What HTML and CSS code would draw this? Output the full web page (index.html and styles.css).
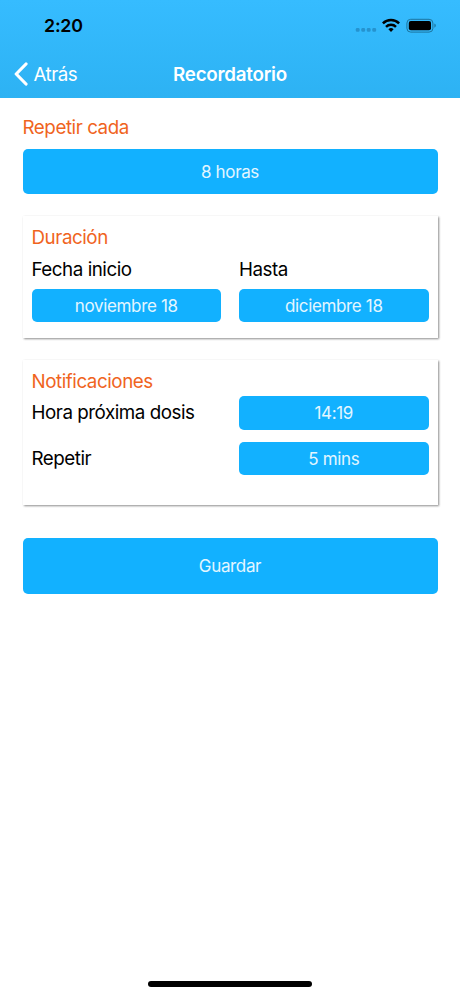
FILE: index.html
```
<!DOCTYPE html>
<html lang="es">
  <head>
    <meta charset="UTF-8" />
    <meta name="viewport" content="width=device-width, initial-scale=1" />
    <title>Recordatorio</title>
    <link rel="stylesheet" href="styles.css">
  </head>

  <body>
    <header class="header">
      <div class="status-bar">
        <span class="time">2:20</span>
        <svg class="status-icons" width="84" height="20" viewBox="0 0 84 20">
          <g fill="#2593cf">
            <rect x="0.8" y="13" width="3.8" height="3.8" rx="1.2" />
            <rect x="6.3" y="13" width="3.8" height="3.8" rx="1.2" />
            <rect x="11.8" y="13" width="3.8" height="3.8" rx="1.2" />
            <rect x="17.3" y="13" width="3.8" height="3.8" rx="1.2" />
          </g>
          <g fill="none" stroke="#000" stroke-width="2.5">
            <path d="M27.9 8.3a11.6 11.6 0 0 1 16.2 0" />
            <path d="M31 11.8a7.2 7.2 0 0 1 10 0" />
          </g>
          <path d="M33.4 14.2a4 4 0 0 1 5.2 0L36 16.9z" />
          <rect x="51.9" y="4.3" width="26" height="12.8" rx="3.8" fill="none" stroke="#1c759f" stroke-width="1" />
          <rect x="53.8" y="6.1" width="22.2" height="9.2" rx="2" />
          <path d="M79.4 8.6c1.9.7 1.9 3.5 0 4.2z" fill="#1c759f" />
        </svg>
      </div>
      <div class="nav-bar">
        <a class="back">
          <svg width="14" height="24" viewBox="0 0 14 24">
            <path d="M12 2 2.2 12 12 22" fill="none" stroke="#fff" stroke-width="3.2" stroke-linecap="round" stroke-linejoin="round" />
          </svg>
          <span class="back-text">Atrás</span>
        </a>
        <h1 class="title">Recordatorio</h1>
      </div>
    </header>

    <main class="content">
      <h2 class="heading">Repetir cada</h2>
      <button class="button button-medium">8 horas</button>

      <section class="card card-duration">
        <h2 class="heading">Duración</h2>
        <div class="grid">
          <span class="label">Fecha inicio</span>
          <span class="label">Hasta</span>
          <button class="button">noviembre 18</button>
          <button class="button">diciembre 18</button>
        </div>
      </section>

      <section class="card card-notifications">
        <h2 class="heading">Notificaciones</h2>
        <div class="grid grid-rows">
          <span class="label">Hora próxima dosis</span>
          <button class="button">14:19</button>
          <span class="label">Repetir</span>
          <button class="button">5 mins</button>
        </div>
      </section>

      <button class="button button-large">Guardar</button>
    </main>

    <div class="home-indicator"></div>
  </body>
</html>
```
FILE: styles.css
```
* {
  box-sizing: border-box;
}

body {
  display: flex;
  flex-direction: column;
  height: 996px;
  margin: 0;
  background-color: #fff;
  color: #000;
  font-family: Inter, "Liberation Sans", sans-serif;
}

.header {
  height: 98px;
  background: linear-gradient(#36bcff, #2db2f3);
}

.status-bar {
  display: flex;
  justify-content: space-between;
  align-items: center;
  height: 50px;
  padding: 0 21px 0 44px;
}

.time {
  font-size: 17.8px;
  font-weight: 600;
  letter-spacing: -0.2px;
}

.nav-bar {
  display: grid;
  grid-template-columns: 1fr auto 1fr;
  align-items: center;
  height: 48px;
  padding: 0 14px;
  color: #fff;
}

.back {
  display: flex;
  align-items: center;
  gap: 5.5px;
}

.back-text {
  font-size: 18.8px;
  letter-spacing: -0.5px;
}

.title {
  margin: 0;
  font-size: 18.8px;
  font-weight: 600;
  letter-spacing: -0.25px;
}

.content {
  flex: 1;
  padding: 17.5px 22.5px 0;
}

.heading {
  margin: 0;
  color: #f0641e;
  font-size: 18.8px;
  font-weight: 400;
  line-height: 24px;
  letter-spacing: -0.45px;
}

.label {
  font-size: 18.8px;
  line-height: 24px;
  letter-spacing: -0.47px;
}

.button {
  display: block;
  width: 100%;
  height: 33.5px;
  padding: 1px 0 0;
  border: none;
  border-radius: 5px;
  background-color: #12b1ff;
  color: #e3f6ff;
  font-family: inherit;
  font-size: 17px;
  letter-spacing: -0.35px;
}

.button-medium {
  height: 44.5px;
  margin-top: 9.5px;
}

.button-large {
  height: 55.5px;
  margin-top: 33px;
}

.card {
  margin-top: 22px;
  padding: 10px 9px 0;
  background-color: #fff;
  box-shadow: 1px 1px 2px rgba(0, 0, 0, 0.45);
}

.card-duration {
  height: 122.5px;
}

.card-notifications {
  height: 145px;
}

.grid {
  display: grid;
  grid-template-columns: 1fr 1fr;
  gap: 7px 18px;
  margin-top: 8px;
}

.grid-rows {
  row-gap: 12px;
  align-items: center;
  margin-top: 2.2px;
}

.grid-rows .label {
  padding-top: 1px;
}

.home-indicator {
  width: 164px;
  height: 5.5px;
  margin: 0 auto 9.5px;
  border-radius: 3px;
  background-color: #000;
}
```
